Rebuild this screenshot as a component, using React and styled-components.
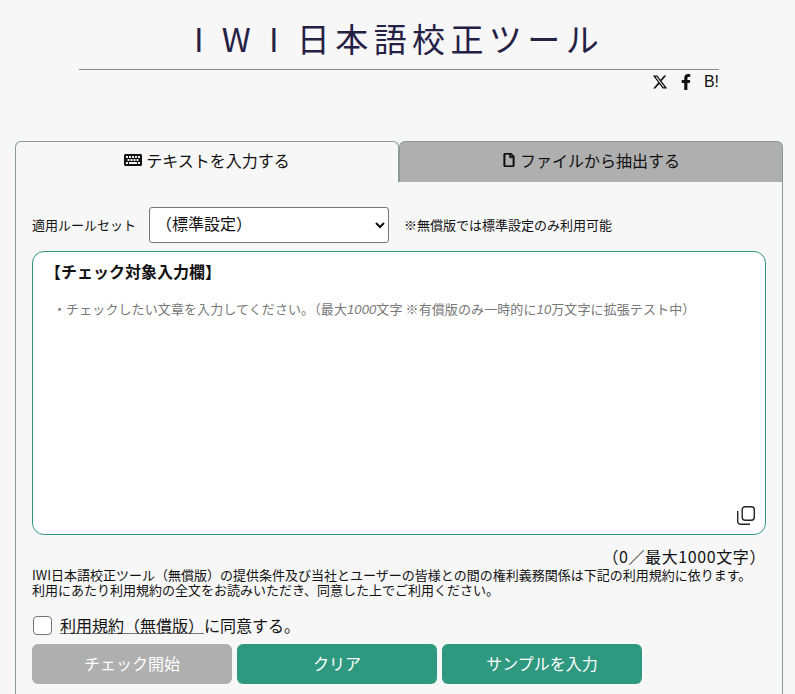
import React from "react";
import styled, { createGlobalStyle } from "styled-components";
import { FaKeyboard, FaRegFile, FaFacebookF } from "react-icons/fa";
import { FaXTwitter } from "react-icons/fa6";

const GlobalStyle = createGlobalStyle`
  html, body {
    margin: 0;
    height: 100%;
    overflow: hidden;
    background: #f7f7f7;
  }
  body {
    font-family: "Noto Sans CJK JP", "Liberation Sans", sans-serif;
    color: #111;
  }
`;

const Page = styled.div`
  height: 694px;
  overflow: hidden;
`;

const Header = styled.header`
  width: 640px;
  margin-left: 79px;
  padding-top: 16px;
`;

const Logo = styled.h1`
  margin: 0;
  height: 53px;
  border-bottom: 1px solid #8c8c8c;
  font-size: 33px;
  line-height: 44px;
  font-weight: 400;
  letter-spacing: 5.4px;
  text-align: center;
  white-space: nowrap;
  color: #252145;
`;

const ShareRow = styled.div`
  display: flex;
  justify-content: flex-end;
  align-items: center;
  gap: 10px;
  height: 22px;
  margin-top: 1px;
  font-size: 16px;
  color: #111;
  font-family: "Liberation Sans", sans-serif;
`;

const Tabs = styled.div`
  display: flex;
  margin: 48px 12px 0 15px;
`;

const Tab = styled.div`
  flex: 1;
  height: 36px;
  padding-bottom: 4px;
  display: flex;
  align-items: center;
  justify-content: center;
  gap: 4px;
  font-size: 16px;
  border: 1px solid #8a9a96;
  border-bottom: none;
  border-radius: 6px 6px 0 0;
  background: ${(p) => (p.$active ? "#f7f7f7" : "#afafaf")};
`;

const Panel = styled.div`
  margin: 0 12px 0 15px;
  padding: 25px 16px 40px;
  border: 1px solid #8a9a96;
  border-top: none;
`;

const RuleRow = styled.div`
  display: flex;
  align-items: center;
  height: 36px;
  font-size: 13px;
`;

const RuleLabel = styled.label`
  width: 117px;
  padding-bottom: 2px;
`;

const RuleSelect = styled.select`
  width: 240px;
  height: 36px;
  padding: 0 0 4px 2px;
  font-family: inherit;
  font-size: 16px;
  color: #111;
  background: #fff;
  border: 1px solid #767676;
  border-radius: 3px;
`;

const RuleNote = styled.span`
  margin-left: 15px;
  padding-bottom: 2px;
`;

const Editor = styled.div`
  position: relative;
  box-sizing: border-box;
  height: 284px;
  margin-top: 8px;
  padding: 7px 12px;
  background: #fff;
  border: 1px solid #2f9980;
  border-radius: 12px;
`;

const EditorTitle = styled.div`
  font-size: 16px;
  line-height: 24px;
  font-weight: 700;
`;

const Placeholder = styled.div`
  margin-top: 16px;
  padding-left: 8px;
  font-size: 13px;
  letter-spacing: 0.1px;
  line-height: 20px;
  color: #777;
  white-space: nowrap;
  i {
    font-family: "Liberation Sans", sans-serif;
  }
`;

const CopyButton = styled.button`
  position: absolute;
  right: 10px;
  bottom: 9px;
  width: 18px;
  height: 19px;
  padding: 0;
  border: none;
  background: none;
  color: #222;
`;

const Counter = styled.div`
  margin-top: 11px;
  text-align: right;
  font-size: 16px;
  letter-spacing: 0.6px;
  line-height: 20px;
`;

const Terms = styled.p`
  margin: 1px 0 0;
  font-size: 13px;
  line-height: 15px;
  white-space: nowrap;
`;

const AgreeRow = styled.div`
  display: flex;
  align-items: center;
  gap: 8px;
  height: 20px;
  margin: 18px 0 0 1px;
  font-size: 16px;
`;

const CheckBox = styled.span`
  box-sizing: border-box;
  width: 19px;
  height: 19px;
  background: #fff;
  border: 1.5px solid #767676;
  border-radius: 4px;
`;

const AgreeText = styled.span`
  padding-bottom: 1px;
  white-space: nowrap;
`;

const TermsLink = styled.span`
  text-decoration: underline;
  text-decoration-color: #777;
  text-decoration-thickness: 1px;
  text-underline-offset: 1px;
`;

const ButtonRow = styled.div`
  display: flex;
  gap: 5px;
  margin-top: 9px;
`;

const ActionButton = styled.button`
  width: 200px;
  height: 40px;
  padding: 0 0 3px;
  border: none;
  border-radius: 6px;
  font-family: inherit;
  font-size: 16px;
  color: #fff;
  background: ${(p) => (p.disabled ? "#afafaf" : "#2f9980")};
`;

const FileIcon = styled(FaRegFile)`
  stroke: currentColor;
  stroke-width: 24px;
`;

const CopyIcon = () => (
  <svg viewBox="0 0 18 19" width="18" height="19" fill="none" stroke="currentColor" strokeWidth="1.4">
    <rect x="5.2" y="0.7" width="12.1" height="13.6" rx="3" />
    <path d="M0.7 5v10.3a3 3 0 0 0 3 3H13" />
  </svg>
);

const App = () => {
  return (
    <Page>
      <GlobalStyle />
      <Header>
        <Logo>I W I 日本語校正ツール</Logo>
        <ShareRow>
          <FaXTwitter size={16} />
          <FaFacebookF size={16} />
          <span>B!</span>
        </ShareRow>
      </Header>
      <Tabs>
        <Tab $active>
          <FaKeyboard size={18} />
          テキストを入力する
        </Tab>
        <Tab>
          <FileIcon size={14} />
          ファイルから抽出する
        </Tab>
      </Tabs>
      <Panel>
        <RuleRow>
          <RuleLabel>適用ルールセット</RuleLabel>
          <RuleSelect defaultValue="std">
            <option value="std">（標準設定）</option>
          </RuleSelect>
          <RuleNote>※無償版では標準設定のみ利用可能</RuleNote>
        </RuleRow>
        <Editor>
          <EditorTitle>【チェック対象入力欄】</EditorTitle>
          <Placeholder>
            ・チェックしたい文章を入力してください。（最大<i>1000</i>文字 ※有償版のみ一時的に<i>10</i>万文字に拡張テスト中）
          </Placeholder>
          <CopyButton>
            <CopyIcon />
          </CopyButton>
        </Editor>
        <Counter>（0／最大1000文字）</Counter>
        <Terms>
          IWI日本語校正ツール（無償版）の提供条件及び当社とユーザーの皆様との間の権利義務関係は下記の利用規約に依ります。
          <br />
          利用にあたり利用規約の全文をお読みいただき、同意した上でご利用ください。
        </Terms>
        <AgreeRow>
          <CheckBox />
          <AgreeText>
            <TermsLink>利用規約（無償版）</TermsLink>に同意する。
          </AgreeText>
        </AgreeRow>
        <ButtonRow>
          <ActionButton disabled>チェック開始</ActionButton>
          <ActionButton>クリア</ActionButton>
          <ActionButton>サンプルを入力</ActionButton>
        </ButtonRow>
      </Panel>
    </Page>
  );
};

export default App;
